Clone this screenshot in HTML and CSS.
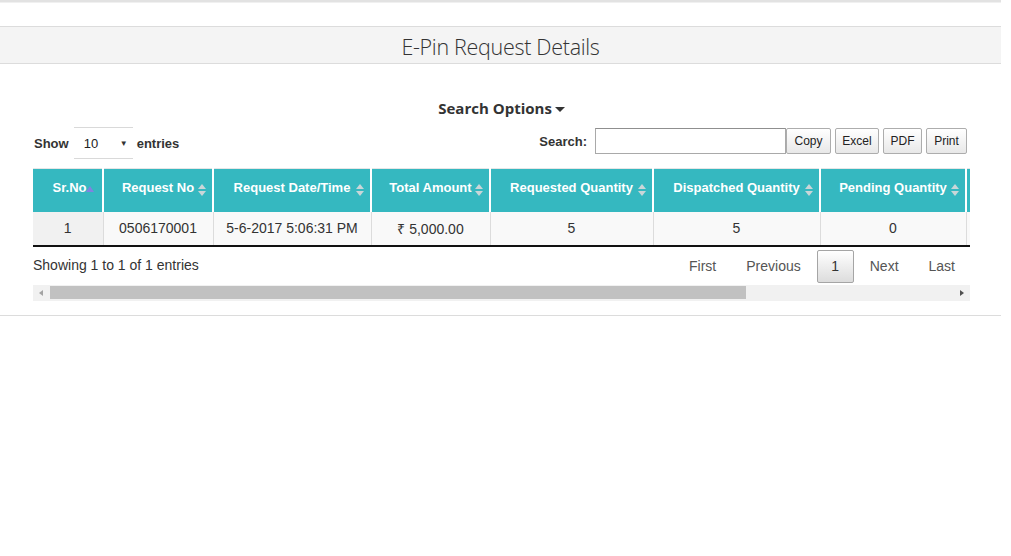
FILE: index.html
```html
<!DOCTYPE html>
<html>
<head>
<meta charset="utf-8">
<link rel="stylesheet" href="styles.css">
</head>
<body>
<div class="page">
  <div class="topline"></div>
  <div class="title-band"><h1>E-Pin Request Details</h1></div>
  <div class="content">
    <div class="search-options">Search Options <span class="caret"></span></div>
    <div class="controls">
      <div class="length">
        <span class="lbl">Show</span>
        <div class="select"><span>10</span><span class="arrow">▼</span></div>
        <span class="lbl">entries</span>
      </div>
      <div class="right-controls">
        <span class="lbl">Search:</span>
        <div class="search-input"></div>
        <div class="btns">
          <button class="btn b-copy">Copy</button>
          <button class="btn b-excel">Excel</button>
          <button class="btn b-pdf">PDF</button>
          <button class="btn b-print">Print</button>
        </div>
      </div>
    </div>
    <div class="scroll">
      <table class="grid">
        <colgroup>
          <col class="c1"><col class="c2"><col class="c3"><col class="c4"><col class="c5"><col class="c6"><col class="c7"><col class="c8">
        </colgroup>
        <thead>
          <tr>
            <th class="sorted">Sr.No<span class="sort asc"><i class="up"></i></span></th>
            <th>Request No<span class="sort"><i class="up"></i><i class="down"></i></span></th>
            <th>Request Date/Time<span class="sort"><i class="up"></i><i class="down"></i></span></th>
            <th>Total Amount<span class="sort"><i class="up"></i><i class="down"></i></span></th>
            <th>Requested Quantity<span class="sort"><i class="up"></i><i class="down"></i></span></th>
            <th>Dispatched Quantity<span class="sort"><i class="up"></i><i class="down"></i></span></th>
            <th>Pending Quantity<span class="sort"><i class="up"></i><i class="down"></i></span></th>
            <th></th>
          </tr>
        </thead>
        <tbody>
          <tr>
            <td class="sorted">1</td>
            <td>0506170001</td>
            <td>5-6-2017 5:06:31 PM</td>
            <td>₹ 5,000.00</td>
            <td>5</td>
            <td>5</td>
            <td>0</td>
            <td></td>
          </tr>
        </tbody>
      </table>
    </div>
    <div class="footer-row">
      <div class="info">Showing 1 to 1 of 1 entries</div>
      <div class="pager">
        <span class="pg">First</span>
        <span class="pg">Previous</span>
        <span class="pg current">1</span>
        <span class="pg">Next</span>
        <span class="pg">Last</span>
      </div>
    </div>
    <div class="hscroll">
      <span class="arr-left"></span>
      <div class="track"><div class="thumb"></div></div>
      <span class="arr-right"></span>
    </div>
  </div>
  <div class="bottomline"></div>
</div>
</body>
</html>
```

FILE: styles.css
```css
html, body {
  margin: 0;
  padding: 0;
  background: #fff;
}
body {
  font-family: "Liberation Sans", Arial, sans-serif;
  color: #333;
}
.page {
  width: 1001px;
}
.topline {
  height: 2px;
  background: #e2e2e2;
  border-bottom: 1px solid #f0f0f0;
}
.title-band {
  margin-top: 23px;
  background: #f4f4f4;
  border-top: 1px solid #dcdcdc;
  border-bottom: 1px solid #dcdcdc;
  height: 36px;
  display: flex;
  align-items: center;
  justify-content: center;
}
.title-band h1 {
  margin: 0;
  font-family: "Open Sans", sans-serif;
  font-weight: 300;
  font-size: 21.5px;
  color: #333;
  letter-spacing: -0.3px;
  padding-top: 2px;
}
.content {
  padding: 0 31px 0 33px;
}
.search-options {
  margin-top: 34px;
  text-align: center;
  font-family: "Open Sans", sans-serif;
  font-weight: 700;
  font-size: 15px;
  color: #333;
  height: 22px;
  line-height: 20px;
}
.caret {
  display: inline-block;
  width: 0;
  height: 0;
  border-left: 5px solid transparent;
  border-right: 5px solid transparent;
  border-top: 5px solid #333;
  vertical-align: middle;
  margin-left: -1px;
}
.controls {
  margin-top: 7px;
  display: flex;
  justify-content: space-between;
  align-items: flex-start;
  height: 31px;
}
.length {
  display: flex;
  align-items: center;
  padding-left: 1px;
}
.lbl {
  font-weight: 700;
  font-size: 13px;
  color: #333;
}
.select {
  margin: 0 4px 0 5px;
  width: 59px;
  height: 32px;
  border-top: 1px solid #d9d9d9;
  border-bottom: 1px solid #d9d9d9;
  display: flex;
  align-items: center;
  justify-content: space-between;
  padding: 0 5px 0 10px;
  box-sizing: border-box;
  font-size: 13px;
  color: #222;
}
.select .arrow {
  font-size: 8px;
  color: #333;
}
.right-controls {
  display: flex;
  align-items: center;
  padding-right: 3px;
  margin-top: 1px;
}
.right-controls .lbl {
  margin-right: 8px;
}
.search-input {
  width: 189px;
  height: 24px;
  border: 1px solid #a9a9a9;
  border-top-color: #8f8f8f;
  background: #fff;
}
.btns {
  display: flex;
  gap: 4px;
}
.btn {
  font-family: "Liberation Sans", Arial, sans-serif;
  font-size: 12px;
  color: #222;
  height: 26px;
  padding: 0 6px;
  border: 1px solid #adadad;
  border-radius: 2px;
  background: linear-gradient(#ffffff, #e8e8e8);
  margin: 0;
}
.b-copy { width: 45px; }
.b-excel { width: 44px; }
.b-pdf { width: 39px; }
.b-print { width: 41px; }
.scroll {
  margin-top: 10px;
  width: 937px;
  overflow: hidden;
}
.grid {
  border-collapse: collapse;
  table-layout: fixed;
  width: 1100px;
}
col.c1 { width: 70px; }
col.c2 { width: 110px; }
col.c3 { width: 158px; }
col.c4 { width: 119px; }
col.c5 { width: 163px; }
col.c6 { width: 167px; }
col.c7 { width: 146px; }
col.c8 { width: 167px; }
.grid th {
  background: #35b8c0;
  color: #fff;
  font-size: 13px;
  font-weight: 700;
  height: 43px;
  box-sizing: border-box;
  padding: 0 14px 5px 14px;
  text-align: center;
  position: relative;
  border-left: 2px solid #fff;
  border-top: 1px solid #e6e6e6;
  white-space: nowrap;
}
.grid th:first-child {
  border-left: none;
}
.grid th.sorted {
  padding: 0 14px 5px 18px;
}
.sort {
  position: absolute;
  right: 5px;
  top: 15px;
  width: 9px;
  height: 13px;
}
.sort.asc {
  right: 7px;
}
.sort i {
  position: absolute;
  left: 0;
  width: 0;
  height: 0;
  border-left: 4px solid transparent;
  border-right: 4px solid transparent;
}
.sort .up {
  top: 0;
  border-bottom: 5px solid #c9d6d8;
}
.sort .down {
  top: 7px;
  border-top: 5px solid #c9d6d8;
}
.sort.asc .up {
  top: 2px;
  border-bottom: 6px solid #7f83e0;
}
.grid td {
  background: #f9f9f9;
  height: 34px;
  box-sizing: border-box;
  font-size: 14px;
  color: #333;
  text-align: center;
  border-left: 1px solid #dcdcdc;
  border-bottom: 2px solid #111;
  padding: 0 4px;
  white-space: nowrap;
}
.grid td:first-child {
  border-left: none;
}
.grid td.sorted {
  background: #f1f1f1;
}
.footer-row {
  display: flex;
  justify-content: space-between;
  align-items: flex-start;
  height: 38px;
}
.info {
  font-size: 14px;
  line-height: 16px;
  color: #333;
  margin-top: 10px;
}
.pager {
  display: flex;
  align-items: center;
  margin-top: 3px;
}
.pg {
  font-size: 14px;
  color: #555;
  padding: 0 15px;
  line-height: 31px;
}
.pg.current {
  width: 35px;
  height: 31px;
  padding: 0;
  text-align: center;
  border: 1px solid #a5a5a5;
  border-radius: 2px;
  background: linear-gradient(#ffffff, #dcdcdc);
  color: #333;
  margin: 0 1px;
}
.hscroll {
  width: 937px;
  height: 16px;
  background: #f1f1f1;
  display: flex;
  align-items: center;
}
.arr-left, .arr-right {
  width: 17px;
  height: 16px;
  position: relative;
  flex: none;
}
.arr-left::after, .arr-right::after {
  content: "";
  position: absolute;
  top: 5px;
  width: 0;
  height: 0;
  border-top: 3px solid transparent;
  border-bottom: 3px solid transparent;
}
.arr-left::after {
  left: 6px;
  border-right: 4px solid #a3a3a3;
}
.arr-right::after {
  left: 7px;
  border-left: 4px solid #505050;
}
.track {
  flex: 1;
  height: 16px;
  display: flex;
  align-items: center;
}
.thumb {
  width: 696px;
  height: 13px;
  background: #c1c1c1;
}
.bottomline {
  margin-top: 14px;
  border-top: 1px solid #dcdcdc;
}
```
